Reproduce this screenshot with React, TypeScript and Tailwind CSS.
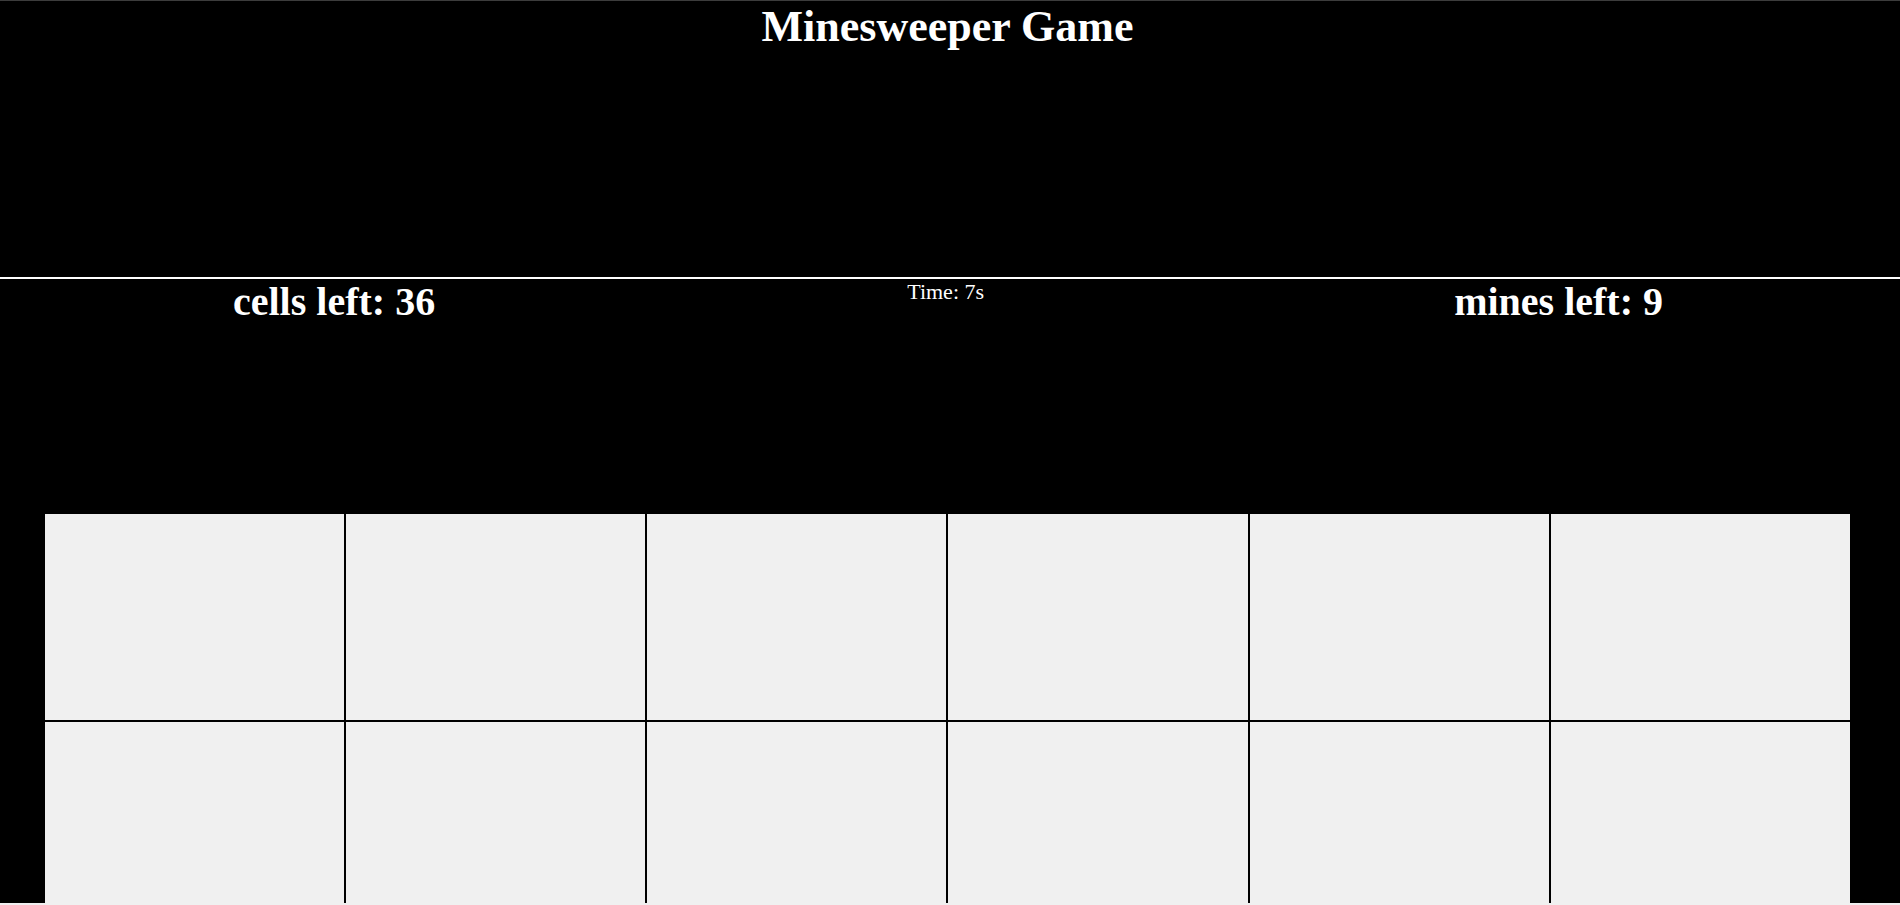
import { useEffect, useState } from "react";

const ROWS = 6;
const COLS = 6;

export default function App() {
  const [seconds, setSeconds] = useState(7);
  const cellsLeft = 36;
  const minesLeft = 9;

  useEffect(() => {
    // timer left frozen on purpose so the screenshot stays stable
    setSeconds(7);
  }, []);

  return (
    <div className="h-screen w-full overflow-hidden bg-[#f0f0f0]">
      <div
        className="h-[903px] w-full overflow-hidden bg-black text-white"
        style={{ fontFamily: '"Liberation Serif", "Times New Roman", serif' }}
      >
        <header className="h-[279px] border-t border-[#3c3c3c] border-b-2 border-b-white">
          <h1 className="pt-[1px] pr-[5px] text-center text-[44px] font-bold leading-[50px]">
            Minesweeper Game
          </h1>
        </header>

        <div className="flex h-[235px] items-start justify-between pl-[233px] pr-[237px]">
          <h2 className="text-[40px] font-bold leading-[46px]">cells left: {cellsLeft}</h2>
          <p className="ml-[2px] text-[22px] leading-[25px]">Time: {seconds}s</p>
          <h2 className="text-[40px] font-bold leading-[46px]">mines left: {minesLeft}</h2>
        </div>

        <div className="ml-[45px] grid w-[1805px] grid-cols-6 gap-[2px] bg-black">
          {Array.from({ length: ROWS * COLS }).map((_, i) => (
            <button
              key={i}
              type="button"
              className="h-[206px] bg-[#f0f0f0]"
              aria-label={`cell ${i + 1}`}
            />
          ))}
        </div>
      </div>
    </div>
  );
}
